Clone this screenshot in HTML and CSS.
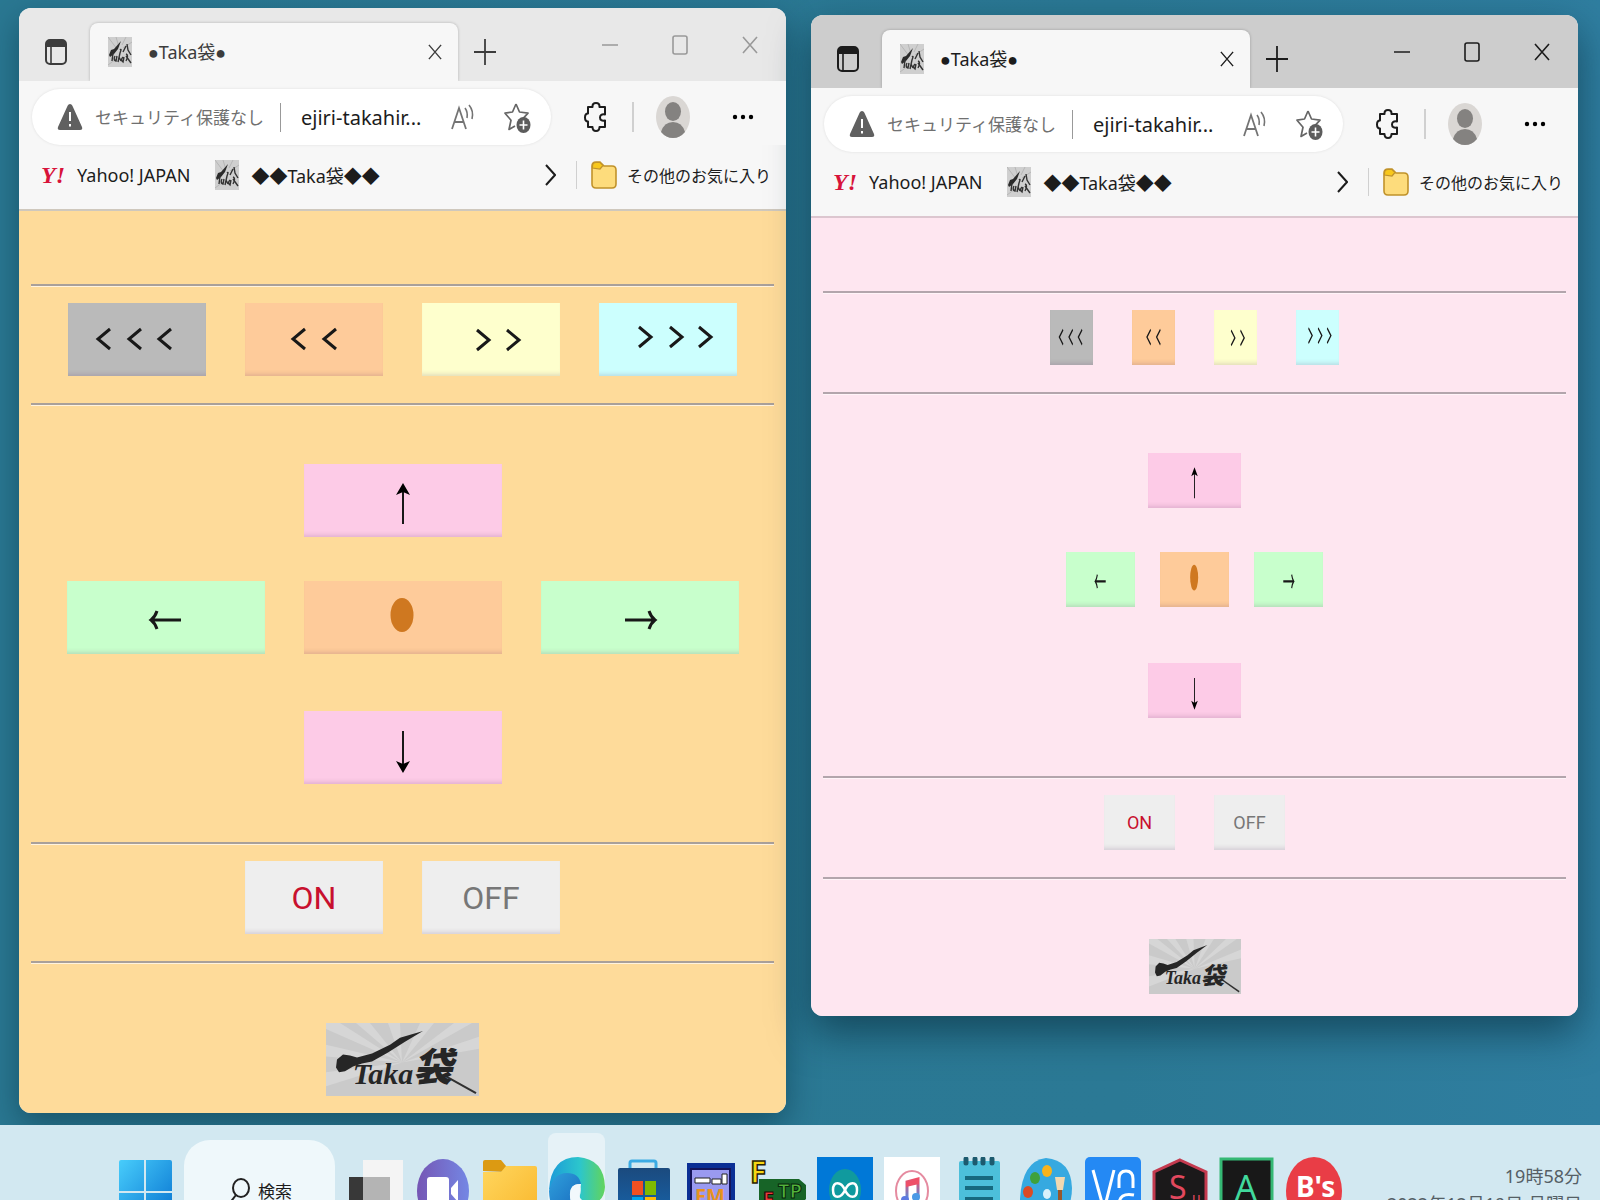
FILE: index.html
```html
<!doctype html>
<html lang="ja">
  <head>
    <title>●Taka袋●</title>
    <meta name="viewport" content="width=device-width, initial-scale=1.0" />
    <meta charset="utf-8" />
    <link rel="stylesheet" href="styles.css">
  </head>
  <body>
    <!-- shared drawings -->
    <svg class="defs" aria-hidden="true">
      <defs>
        <linearGradient id="edge-blue" x1="0" y1="0" x2="1" y2="1">
          <stop offset="0" stop-color="#2fa0dc" />
          <stop offset="1" stop-color="#1158b4" />
        </linearGradient>
        <linearGradient id="edge-green" x1="0" y1="0" x2="1" y2="0">
          <stop offset="0" stop-color="#1c9ad8" />
          <stop offset="0.55" stop-color="#2cc6cc" />
          <stop offset="1" stop-color="#62d45c" />
        </linearGradient>
        <linearGradient id="win-blue" x1="0" y1="0" x2="1" y2="1">
          <stop offset="0" stop-color="#48cdfb" />
          <stop offset="1" stop-color="#0570cf" />
        </linearGradient>
        <linearGradient id="chat" x1="0" y1="0" x2="1" y2="0">
          <stop offset="0" stop-color="#7556b4" />
          <stop offset="1" stop-color="#7487e4" />
        </linearGradient>
        <linearGradient id="folder" x1="0" y1="0" x2="1" y2="1">
          <stop offset="0" stop-color="#ffd65e" />
          <stop offset="1" stop-color="#f9b62a" />
        </linearGradient>
        <linearGradient id="store" x1="0" y1="0" x2="0" y2="1">
          <stop offset="0" stop-color="#1b4a7e" />
          <stop offset="1" stop-color="#1667b0" />
        </linearGradient>
        <linearGradient id="note" x1="0" y1="0" x2="0" y2="1">
          <stop offset="0" stop-color="#ee4f68" />
          <stop offset="1" stop-color="#4a8fe6" />
        </linearGradient>
      </defs>
      <symbol id="i-panel" viewBox="0 0 22 26">
        <rect x="1" y="1" width="20" height="24" rx="4" fill="none" stroke="currentColor" stroke-width="2" />
        <path d="M1 8V5q0-4 4-4h12q4 0 4 4v3z" fill="currentColor" />
        <path d="M6 8v17" stroke="currentColor" stroke-width="1.6" />
      </symbol>
      <symbol id="i-x" viewBox="0 0 16 18" preserveAspectRatio="none">
        <path d="M1 1l14 16M15 1L1 17" fill="none" stroke="currentColor" stroke-width="1.6" />
      </symbol>
      <symbol id="i-plus" viewBox="0 0 22 26">
        <path d="M11 0v26M0 13h22" stroke="currentColor" stroke-width="1.8" />
      </symbol>
      <symbol id="i-min" viewBox="0 0 16 18">
        <path d="M0 9h16" stroke="currentColor" stroke-width="1.6" />
      </symbol>
      <symbol id="i-max" viewBox="0 0 16 20">
        <rect x="1" y="1" width="14" height="18" rx="2" fill="none" stroke="currentColor" stroke-width="1.6" />
      </symbol>
      <symbol id="i-warn" viewBox="0 0 26 28">
        <path d="M13 1q1.600 0 2.400 1.800L25 24q1 3-2 3H3q-3 0-2-3L10.600 2.800Q11.400 1 13 1z" fill="#606060" />
        <path d="M13 9v9M13 21v2.500" stroke="#fff" stroke-width="2" />
      </symbol>
      <symbol id="i-read" viewBox="0 0 24 26">
        <path d="M1 25L8 4l7 21M3.500 18h9" fill="none" stroke="#747474" stroke-width="1.800" />
        <path d="M14 4q3 4 2 10M18 1q5 6 3 14" fill="none" stroke="#747474" stroke-width="1.600" />
      </symbol>
      <symbol id="i-star" viewBox="0 0 27 31">
        <path d="M12 2l3.500 8 8.500 1.200-6 6.500M12 2L8.500 10 1 11.200l6 7L5 27.500l6-3.500" fill="none" stroke="#666" stroke-width="1.700" stroke-linejoin="round" />
        <ellipse cx="19.500" cy="23" rx="7" ry="8" fill="#5c5c5c" />
        <path d="M19.500 18.500v9M15.500 23h8" stroke="#fff" stroke-width="1.600" />
      </symbol>
      <symbol id="i-puzzle" viewBox="0 0 23 30">
        <path d="M4 5h4.500q-.3-4 3.500-4t3.500 4H21v7.500q-5-.8-5 3t5 3V25h-5.500q0 4-3.500 4t-3.500-4H4v-5.500q-3 0-3-4t3-4z" fill="none" stroke="currentColor" stroke-width="2" stroke-linejoin="round" />
      </symbol>
      <symbol id="i-user" viewBox="0 0 34 42">
        <ellipse cx="17" cy="21" rx="17" ry="21" fill="#dad7d4" />
        <ellipse cx="17" cy="15.500" rx="8" ry="9.500" fill="#848280" />
        <path d="M5 36q3-10 12-10t12 10q-5 6-12 6T5 36z" fill="#848280" />
      </symbol>
      <symbol id="i-dots" viewBox="0 0 22 6">
        <circle cx="3" cy="3" r="2.200" /><circle cx="11" cy="3" r="2.200" /><circle cx="19" cy="3" r="2.200" />
      </symbol>
      <symbol id="i-chevron" viewBox="0 0 11 22">
        <path d="M1 1l9 10-9 10" fill="none" stroke="currentColor" stroke-width="2" />
      </symbol>
      <symbol id="i-folder" viewBox="0 0 26 28">
        <path d="M1 8V5q0-4 4-4h4l4 4h8q4 0 4 4v14q0 4-4 4H5q-4 0-4-4z" fill="#fddc7c" stroke="#c0922a" stroke-width="1.600" />
        <path d="M1.500 7V5q0-3.500 3.500-3.500h4l3 3-3 3.500z" fill="#f8c81c" stroke="#c0922a" stroke-width="1.200" />
      </symbol>
      <symbol id="i-taka" viewBox="0 0 24 30">
        <path d="M0 0h24v30H0z" fill="#cfcfcf" />
        <path d="M0 0l9 12M8 0l3 10M18 0l-4 8M24 5l-9 6M0 28l8-6" stroke="#b6b6b6" />
        <path d="M1 18l2-5 3-1 7-8-3 8-4 5-4 3z" fill="#2a2a2a" />
        <path d="M5 16l-1 8M7 19q-2 4 1 5l1-5M12 13q2-2 0 3l-2 9M11 20l2 4M15 20q-3 3 0 5l1-5M18 9l-3 6M19 7l1 6 3 5M18 17q3 1 0 7M18 19l5 7" fill="none" stroke="#333" stroke-width="1.400" />
      </symbol>
      <symbol id="i-brush" viewBox="0 0 153 74" preserveAspectRatio="none">
        <path d="M0 0h153v74H0z" fill="#cacaca" />
        <path d="M76 40L0 6V0h14zM76 40L30 0h14zM76 40L62 0h12zM76 40L94 0h14zM76 40L128 0h18zM76 40l77-26v12zM76 40L0 22v12zM76 40L0 50v14z" fill="#d6d6d6" />
        <path d="M10 45l1-8 6-5 7 1 7 2 15-4 18-9 10-7 23-7-18 11-17 11-16 9-10 2-9 3-8 5-6 1z" fill="#262626" />
        <path d="M120 54l30 17" stroke="#303030" stroke-width="2" fill="none" />
      </symbol>

      <!-- faces of the control keys, stretched with the key -->
      <symbol id="k-back3" viewBox="0 0 138 73" preserveAspectRatio="none">
        <path d="M42 26L30 36l12 10M73 26L61 36l12 10M103 26L91 36l12 10" />
      </symbol>
      <symbol id="k-back2" viewBox="0 0 138 73" preserveAspectRatio="none">
        <path d="M60 26L48 36l12 10M91 26L79 36l12 10" />
      </symbol>
      <symbol id="k-next2" viewBox="0 0 138 73" preserveAspectRatio="none">
        <path d="M55 27l12 10-12 10M85 27l12 10-12 10" />
      </symbol>
      <symbol id="k-next3" viewBox="0 0 138 73" preserveAspectRatio="none">
        <path d="M40 24l12 10-12 10M71 24l12 10-12 10M100 24l12 10-12 10" />
      </symbol>
      <symbol id="k-up" viewBox="0 0 198 73" preserveAspectRatio="none">
        <path d="M99 24v36" stroke-width="2" />
        <path d="M99 19l7 12-7-3-7 3z" fill="#000" stroke="none" />
      </symbol>
      <symbol id="k-down" viewBox="0 0 198 73" preserveAspectRatio="none">
        <path d="M99 20v37" stroke-width="2" />
        <path d="M99 62l7-12-7 3-7-3z" fill="#000" stroke="none" />
      </symbol>
      <symbol id="k-left" viewBox="0 0 198 73" preserveAspectRatio="none">
        <path d="M84 39h30M90 30q-2 6-6 9 4 3 6 9" />
      </symbol>
      <symbol id="k-right" viewBox="0 0 198 73" preserveAspectRatio="none">
        <path d="M84 39h30M108 30q2 6 6 9-4 3-6 9" />
      </symbol>
      <symbol id="k-stop" viewBox="0 0 198 73" preserveAspectRatio="none">
        <ellipse cx="98" cy="34" rx="11.500" ry="17" fill="#cf7820" stroke="none" />
      </symbol>
    </svg>

    <main class="desktop">
      <section class="window inactive">
        <header class="titlebar">
          <button class="tab-menu" aria-label="タブ操作メニュー"><svg width="22" height="26"><use href="#i-panel" /></svg></button>
          <div class="tab">
            <svg width="24" height="30"><use href="#i-taka" /></svg>
            <span class="tab-title">●Taka袋●</span>
            <button aria-label="タブを閉じる"><svg width="14" height="16"><use href="#i-x" /></svg></button>
          </div>
          <button class="new-tab" aria-label="新しいタブ"><svg width="22" height="26"><use href="#i-plus" /></svg></button>
          <div class="window-buttons">
            <button aria-label="最小化"><svg width="16" height="18"><use href="#i-min" /></svg></button>
            <button aria-label="最大化"><svg width="16" height="20"><use href="#i-max" /></svg></button>
            <button aria-label="閉じる"><svg width="16" height="18"><use href="#i-x" /></svg></button>
          </div>
        </header>
        <div class="toolbar">
          <div class="address">
            <svg width="26" height="28"><use href="#i-warn" /></svg>
            <label for="url-1">セキュリティ保護なし</label>
            <input id="url-1" type="text" value="ejiri-takahir..." />
            <button aria-label="音声で読み上げる"><svg width="24" height="26"><use href="#i-read" /></svg></button>
            <button aria-label="お気に入りに追加"><svg width="27" height="31"><use href="#i-star" /></svg></button>
          </div>
          <button class="extensions" aria-label="拡張機能"><svg width="23" height="30"><use href="#i-puzzle" /></svg></button>
          <button class="profile" aria-label="プロファイル"><svg width="34" height="42"><use href="#i-user" /></svg></button>
          <button class="more" aria-label="設定など"><svg width="22" height="6"><use href="#i-dots" /></svg></button>
        </div>
        <nav class="bookmarks">
          <a href="#"><span class="yahoo">Y!</span>Yahoo! JAPAN</a>
          <a href="#"><svg width="24" height="30"><use href="#i-taka" /></svg>◆◆Taka袋◆◆</a>
          <button class="next" aria-label="次へ"><svg width="11" height="22"><use href="#i-chevron" /></svg></button>
          <a class="others" href="#"><svg width="26" height="28"><use href="#i-folder" /></svg>その他のお気に入り</a>
        </nav>
        <div class="page page-wide">
          <hr>
          <div class="keys speed">
            <button class="key gray" aria-label="<<<"><svg><use href="#k-back3" /></svg></button>
            <button class="key orange" aria-label="<<"><svg><use href="#k-back2" /></svg></button>
            <button class="key yellow" aria-label=">>"><svg><use href="#k-next2" /></svg></button>
            <button class="key cyan" aria-label=">>>"><svg><use href="#k-next3" /></svg></button>
          </div>
          <hr>
          <div class="pad">
            <div class="keys"><button class="key vertical pink" aria-label="↑"><svg><use href="#k-up" /></svg></button></div>
            <div class="keys middle">
              <button class="key green" aria-label="←"><svg><use href="#k-left" /></svg></button>
              <button class="key orange" aria-label="●"><svg><use href="#k-stop" /></svg></button>
              <button class="key green" aria-label="→"><svg><use href="#k-right" /></svg></button>
            </div>
            <div class="keys"><button class="key vertical pink" aria-label="↓"><svg><use href="#k-down" /></svg></button></div>
          </div>
          <hr>
          <div class="keys power">
            <button class="key on">ON</button>
            <button class="key off">OFF</button>
          </div>
          <hr>
          <a class="logo" href="#"><svg><use href="#i-brush" /></svg><span>Taka<b>袋</b></span></a>
        </div>
      </section>

      <section class="window active">
        <header class="titlebar">
          <button class="tab-menu" aria-label="タブ操作メニュー"><svg width="22" height="26"><use href="#i-panel" /></svg></button>
          <div class="tab">
            <svg width="24" height="30"><use href="#i-taka" /></svg>
            <span class="tab-title">●Taka袋●</span>
            <button aria-label="タブを閉じる"><svg width="14" height="16"><use href="#i-x" /></svg></button>
          </div>
          <button class="new-tab" aria-label="新しいタブ"><svg width="22" height="26"><use href="#i-plus" /></svg></button>
          <div class="window-buttons">
            <button aria-label="最小化"><svg width="16" height="18"><use href="#i-min" /></svg></button>
            <button aria-label="最大化"><svg width="16" height="20"><use href="#i-max" /></svg></button>
            <button aria-label="閉じる"><svg width="16" height="18"><use href="#i-x" /></svg></button>
          </div>
        </header>
        <div class="toolbar">
          <div class="address">
            <svg width="26" height="28"><use href="#i-warn" /></svg>
            <label for="url-2">セキュリティ保護なし</label>
            <input id="url-2" type="text" value="ejiri-takahir..." />
            <button aria-label="音声で読み上げる"><svg width="24" height="26"><use href="#i-read" /></svg></button>
            <button aria-label="お気に入りに追加"><svg width="27" height="31"><use href="#i-star" /></svg></button>
          </div>
          <button class="extensions" aria-label="拡張機能"><svg width="23" height="30"><use href="#i-puzzle" /></svg></button>
          <button class="profile" aria-label="プロファイル"><svg width="34" height="42"><use href="#i-user" /></svg></button>
          <button class="more" aria-label="設定など"><svg width="22" height="6"><use href="#i-dots" /></svg></button>
        </div>
        <nav class="bookmarks">
          <a href="#"><span class="yahoo">Y!</span>Yahoo! JAPAN</a>
          <a href="#"><svg width="24" height="30"><use href="#i-taka" /></svg>◆◆Taka袋◆◆</a>
          <button class="next" aria-label="次へ"><svg width="11" height="22"><use href="#i-chevron" /></svg></button>
          <a class="others" href="#"><svg width="26" height="28"><use href="#i-folder" /></svg>その他のお気に入り</a>
        </nav>
        <div class="page page-small">
          <hr>
          <div class="keys speed">
            <button class="key gray" aria-label="<<<"><svg><use href="#k-back3" /></svg></button>
            <button class="key orange" aria-label="<<"><svg><use href="#k-back2" /></svg></button>
            <button class="key yellow" aria-label=">>"><svg><use href="#k-next2" /></svg></button>
            <button class="key cyan" aria-label=">>>"><svg><use href="#k-next3" /></svg></button>
          </div>
          <hr>
          <div class="pad">
            <div class="keys"><button class="key vertical pink" aria-label="↑"><svg><use href="#k-up" /></svg></button></div>
            <div class="keys middle">
              <button class="key green" aria-label="←"><svg><use href="#k-left" /></svg></button>
              <button class="key orange" aria-label="●"><svg><use href="#k-stop" /></svg></button>
              <button class="key green" aria-label="→"><svg><use href="#k-right" /></svg></button>
            </div>
            <div class="keys"><button class="key vertical pink" aria-label="↓"><svg><use href="#k-down" /></svg></button></div>
          </div>
          <hr>
          <div class="keys power">
            <button class="key on">ON</button>
            <button class="key off">OFF</button>
          </div>
          <hr>
          <a class="logo" href="#"><svg><use href="#i-brush" /></svg><span>Taka<b>袋</b></span></a>
        </div>
      </section>
    </main>

    <footer class="taskbar">
      <button class="app" aria-label="スタート">
        <svg viewBox="0 0 56 66"><path d="M1 5q0-2 2-2h23v31H1zM28 3h24q2 0 2 2v29H28zM1 36h25v30H1zM28 36h26v30H28z" fill="url(#win-blue)" /></svg>
      </button>
      <button class="search">
        <svg width="22" height="28" viewBox="0 0 22 28"><ellipse cx="13" cy="10" rx="8" ry="9" /><path d="M8 17L1 26" /></svg>
        検索
      </button>
      <button class="app" aria-label="タスク ビュー">
        <svg viewBox="0 0 56 66"><path d="M15 3h40v60H15z" fill="#f4f4f4" /><path d="M1 20h41v46H1z" fill="#383838" /><path d="M15 20h27v46H15z" fill="#b4b4b4" /></svg>
      </button>
      <button class="app" aria-label="チャット">
        <svg viewBox="0 0 56 66"><ellipse cx="28" cy="34" rx="26" ry="32" fill="url(#chat)" /><rect x="12" y="20" width="22" height="28" rx="3" fill="#fff" /><path d="M36 31l7-8v22l-7-8z" fill="#fff" /></svg>
      </button>
      <button class="app" aria-label="エクスプローラー">
        <svg viewBox="0 0 56 66"><path d="M1 14V5q0-2 2-2h16l5 6v6z" fill="#dc9a12" /><path d="M1 15h18l5-6h29q2 0 2 2v55H1z" fill="url(#folder)" /></svg>
      </button>
      <button class="app current" aria-label="Microsoft Edge">
        <svg viewBox="0 0 56 66">
          <path d="M0 33Q2 0 29 0q26 2 27 30-1 16-16 17-12-1-9-9 2-6-1-10Q18 10 0 33z" fill="url(#edge-green)" />
          <path d="M0 34q4-18 18-18 12 0 14 11-12-1-11 12 2 19 22 20-9 7-18 7Q1 62 0 34z" fill="url(#edge-blue)" />
          <path d="M32 27q-11-1-11 12 0 6 4 10l8-6q-4-3-2-8z" fill="#f2f8fc" />
        </svg>
      </button>
      <button class="app" aria-label="Microsoft Store">
        <svg viewBox="0 0 56 66"><path d="M14 13V6q0-2 2-2h22q2 0 2 2v7" fill="none" stroke="#3cabe4" stroke-width="3" /><path d="M2 13q0-2 2-2h48q2 0 2 2v53H2z" fill="url(#store)" /><path d="M16 24h11v14H16z" fill="#f25022" /><path d="M29 24h11v14H29z" fill="#7fba00" /><path d="M16 40h11v14H16z" fill="#00a4ef" /><path d="M29 40h11v14H29z" fill="#ffb900" /></svg>
      </button>
      <button class="app" aria-label="FM">
        <svg viewBox="0 0 56 66"><path d="M4 6h48v60H4z" fill="#0b2f95" /><path d="M8 12h39v54H8z" fill="#9a9af0" stroke="#15155a" stroke-width="2" /><path d="M12 21h15v5H12zM29 22h9v5h-9zM39 17h5v10h-5z" fill="#fff" stroke="#222" /><text x="12" y="46" font-size="20" font-weight="bold" fill="#e8921c">FM</text></svg>
      </button>
      <button class="app" aria-label="FFFTP">
        <svg viewBox="0 0 56 66"><path d="M9 22h40l7 6v14l-9 8v16H9z" fill="#176427" /><text x="0" y="26" font-size="30" font-weight="bold" fill="#f6d613" stroke="#2a2400" stroke-width="1.500">F</text><text x="28" y="41" font-size="20" font-weight="bold" fill="#52b43b" stroke="#07240c">TP</text><text x="13" y="49" font-size="20" font-weight="bold" fill="#ec3b3b" stroke="#240404">F</text></svg>
      </button>
      <button class="app" aria-label="Arduino">
        <svg viewBox="0 0 56 66"><path d="M0 0h56v66H0z" fill="#0078d7" /><ellipse cx="28" cy="33" rx="16" ry="21" fill="#109a9e" /><path d="M28 33c-4-9-12-9-12 0s8 9 12 0 12-9 12 0-8 9-12 0z" fill="none" stroke="#fff" stroke-width="2.500" /></svg>
      </button>
      <button class="app" aria-label="iTunes">
        <svg viewBox="0 0 56 66"><path d="M0 0h56v66H0z" fill="#fff" /><ellipse cx="28" cy="34" rx="16" ry="20" fill="none" stroke="#e58ba0" stroke-width="2" /><path d="M23 43V25l11-3v18" fill="none" stroke="url(#note)" stroke-width="3" /><path d="M22 25l13-3v5l-13 3z" fill="#ee4f68" /><ellipse cx="21" cy="43" rx="4" ry="4" fill="#5c7ae2" /><ellipse cx="32" cy="40" rx="4" ry="4" fill="#4a9ae6" /></svg>
      </button>
      <button class="app" aria-label="メモ帳">
        <svg viewBox="0 0 56 66"><path d="M8 6q0-2 2-2h37q2 0 2 2v60H8z" fill="#4cbfda" /><path d="M14 21h28M14 31h28M14 42h28M14 53h28" stroke="#16697f" stroke-width="4" /><path d="M15 2v4M24 2v4M32 2v4M41 2v4" stroke="#1c5a6e" stroke-width="5" stroke-linecap="round" /></svg>
      </button>
      <button class="app" aria-label="ペイント">
        <svg viewBox="0 0 56 66"><path d="M28 1q25 2 26 30 0 22-16 35H6q-4-10-4-24Q4 4 28 1z" fill="#36a9e0" /><ellipse cx="17" cy="21" rx="5" ry="6" fill="#3fa13b" /><ellipse cx="29" cy="14" rx="5" ry="6" fill="#f9b31c" /><ellipse cx="10" cy="35" rx="5" ry="6" fill="#dc4a24" /><ellipse cx="29" cy="37" rx="4" ry="5" fill="#d8f1fb" /><path d="M37 20h10l-2 13h-6z" fill="#f2d9b0" /><path d="M40 33h4v33h-4z" fill="#97572b" /></svg>
      </button>
      <button class="app" aria-label="VNC Viewer">
        <svg viewBox="0 0 56 66"><rect width="56" height="80" rx="5" fill="#2489f4" /><path d="M8 13l11 40 10-40" fill="none" stroke="#fff" stroke-width="3" /><path d="M34 31V22q0-8 7-8t7 8v9M49 38q-15-3-15 10 0 12 15 8" fill="none" stroke="#fff" stroke-width="3" /></svg>
      </button>
      <button class="app" aria-label="S">
        <svg viewBox="0 0 56 66"><path d="M28 3l26 12v60H2V15z" fill="#1b191a" stroke="#c43a4f" stroke-width="3" /><text x="17" y="42" font-size="32" fill="#e2485e">S</text><text x="40" y="46" font-size="14" fill="#e2485e">u</text></svg>
      </button>
      <button class="app" aria-label="A">
        <svg viewBox="0 0 56 66"><path d="M2 2h51v70H2z" fill="#181818" stroke="#35b874" stroke-width="3" /><text x="16" y="43" font-size="34" fill="#41d99c">A</text></svg>
      </button>
      <button class="app" aria-label="B's">
        <svg viewBox="0 0 56 66"><ellipse cx="28" cy="34" rx="28" ry="34" fill="#e93d46" /><text x="10" y="40" font-size="28" font-weight="bold" fill="#fff">B's</text></svg>
      </button>
      <div class="clock">
        <time>19時58分</time>
        <time>2022年12月19日 月曜日</time>
      </div>
    </footer>
  </body>
</html>
```

FILE: styles.css
```css
* {
  box-sizing: border-box;
}

body {
  margin: 0;
  height: 100vh;
  overflow: hidden;
  display: flex;
  flex-direction: column;
  background: linear-gradient(90deg, #2a7892, #2b7995 70%, #2f7ea0);
  color: #1c1c1c;
  font-family: "Noto Sans", "Liberation Sans", "Noto Sans CJK JP", sans-serif;
  font-size: 18px;
}

button {
  display: block;
  padding: 0;
  border: none;
  background: none;
  color: inherit;
  font: inherit;
}

a {
  color: inherit;
  text-decoration: none;
}

svg {
  display: block;
  flex: none;
}

.defs {
  position: absolute;
  width: 0;
  height: 0;
}

/* windows */

.desktop {
  flex: 1;
  min-height: 0;
  display: flex;
  align-items: flex-start;
  gap: 25px;
  padding: 8px 22px 0 19px;
}

.window {
  flex: 1;
  min-width: 0;
  border-radius: 12px;
  overflow: hidden;
  background: #f7f7f7;
  box-shadow: 0 12px 32px rgba(5, 40, 55, 0.45);
}

.window.active {
  margin-top: 7px;
  box-shadow: 0 16px 40px rgba(5, 40, 55, 0.6);
}

.titlebar {
  display: flex;
  height: 73px;
  padding: 0 28px 0 26px;
  background: #e8e8e8;
  color: #3c3c3c;
}

.active .titlebar {
  background: #cdcdcd;
  color: #1c1c1c;
}

.tab-menu,
.new-tab {
  margin-top: 15px;
}

.tab {
  flex: 0 1 368px;
  display: flex;
  align-items: center;
  margin: 15px 16px 0 23px;
  padding: 0 16px 0 18px;
  border-radius: 8px 8px 0 0;
  background: #f7f7f7;
  box-shadow: 0 0 3px rgba(0, 0, 0, 0.25);
}

.tab-title {
  flex: 1;
  margin-left: 16px;
  line-height: 24px;
}

.window-buttons {
  display: flex;
  align-items: center;
  gap: 54px;
  margin-left: auto;
}

.inactive .window-buttons {
  color: #999;
}

.toolbar {
  position: relative;
  display: flex;
  align-items: center;
  padding: 8px 32px 0 13px;
  background: #f7f7f7;
}

.address {
  flex: 1;
  min-width: 0;
  display: flex;
  align-items: center;
  height: 56px;
  padding: 0 20px 0 25px;
  border-radius: 28px;
  background: #fff;
  box-shadow: 0 0 3px rgba(0, 0, 0, 0.1);
}

.address label {
  margin-left: 12px;
  padding-right: 16px;
  border-right: 1px solid #999;
  color: #707070;
  font-size: 17px;
  line-height: 29px;
  white-space: nowrap;
}

.address input {
  flex: 1;
  min-width: 0;
  padding: 0 0 0 20px;
  border: none;
  outline: none;
  background: none;
  color: #1c1c1c;
  font: inherit;
  font-size: 20px;
}

.address button + button {
  margin-left: 29px;
}

.extensions {
  margin-left: 33px;
  padding-right: 25px;
  border-right: 2px solid #d0d0d0;
}

.profile {
  margin: 0 42px 0 22px;
}

.bookmarks {
  display: flex;
  align-items: center;
  height: 66px;
  padding: 0 15px 4px 22px;
  border-bottom: 2px solid #cfc8bd;
  white-space: nowrap;
}

.active .bookmarks {
  border-bottom-color: #dcc6cf;
}

.bookmarks a {
  display: flex;
  align-items: center;
  gap: 12px;
  margin-right: 25px;
}

.yahoo {
  width: 24px;
  color: #d8133a;
  font: italic bold 24px "Liberation Serif", serif;
}

.next {
  margin: 0 20px 0 auto;
}

.bookmarks .others {
  gap: 10px;
  margin: 0;
  padding-left: 14px;
  border-left: 1px solid #d0d0d0;
  font-size: 16px;
}

/* controller page */

.page {
  padding: 73px 12px 17px;
  background: #fedb9a;
}

.page-wide {
  --key-height: 73px;
  --speed-width: 138px;
  --power-width: 138px;
  --arrow-width: 198px;
  --middle-width: 198px;
  --middle-gap: 39px;
  --logo-width: 153px;
  --label-size: 32px;
  --logo-size: 30px;
}

.page-small {
  --key-height: 55px;
  --speed-width: 43px;
  --power-width: 71px;
  --arrow-width: 93px;
  --middle-width: 69px;
  --middle-gap: 25px;
  --logo-width: 92px;
  --label-size: 18px;
  --logo-size: 18px;
  padding-bottom: 22px;
  background: #fee6f0;
}

.page hr {
  height: 3px;
  margin: 0;
  border: solid;
  border-width: 2px 0 1px;
  border-color: #a9a09a #fff0d8 #fff3df;
}

.page-small hr {
  border-color: #b3a5ac #fff #fff4f8;
}

.keys {
  display: flex;
  justify-content: center;
  gap: 39px;
}

.speed,
.power {
  padding: 16px 0 27px;
}

.pad {
  padding: 58px 0;
}

.middle {
  gap: var(--middle-gap);
  margin: 44px 0 57px;
}

.page-small .middle {
  margin-bottom: 56px;
}

.key {
  width: var(--speed-width);
  height: var(--key-height);
  box-shadow: inset 0 -5px 4px -3px rgba(80, 40, 90, 0.16);
}

.key svg {
  width: 100%;
  height: 100%;
  fill: none;
  stroke: #181818;
  stroke-width: 3;
}

.middle .key {
  width: var(--middle-width);
}

.vertical {
  width: var(--arrow-width);
}

.power .key {
  width: var(--power-width);
  background: #eee;
  font-family: Roboto, sans-serif;
  font-size: var(--label-size);
}

.power .on {
  color: #c8102e;
}

.power .off {
  color: #777;
}

.gray {
  background: #bababa;
}

.orange {
  background: #fecb9a;
}

.yellow {
  background: #feffcd;
}

.cyan {
  background: #ccfffe;
}

.pink {
  background: #fdcbe7;
}

.green {
  background: #c8ffcc;
}

.logo {
  display: grid;
  width: var(--logo-width);
  height: var(--key-height);
  margin: 59px auto 0;
}

.logo svg,
.logo span {
  grid-area: 1 / 1;
  width: 100%;
  height: 100%;
}

.logo span {
  display: flex;
  align-items: flex-end;
  justify-content: center;
  padding-bottom: 4px;
  color: #262626;
  font: italic bold var(--logo-size) / 1.2 "Liberation Serif", "Noto Sans CJK JP", serif;
}

.logo b {
  font-size: 1.3em;
}

/* taskbar */

.taskbar {
  flex: 0 0 75px;
  display: flex;
  align-items: flex-start;
  overflow: hidden;
  position: relative;
  padding: 8px 18px 0 112px;
  background: #d2e8f1;
}

.app {
  display: flex;
  align-items: flex-start;
  justify-content: center;
  flex: 0 0 67px;
  height: 100px;
  padding-top: 24px;
}

.app svg {
  width: 56px;
  height: 66px;
  font-family: "Noto Sans", sans-serif;
}

.current {
  flex-basis: 57px;
  margin: 0 5px;
  border-radius: 8px;
  background: #e6f2f7;
}

.search {
  display: flex;
  gap: 8px;
  flex: 0 0 151px;
  height: 100px;
  margin: 7px 7px 0 5px;
  padding: 38px 0 0 44px;
  border-radius: 26px;
  background: #eff8fb;
  font-size: 17px;
}

.search svg {
  fill: none;
  stroke: #222;
  stroke-width: 2;
}

.clock {
  display: flex;
  flex-direction: column;
  align-items: flex-end;
  margin: 29px 0 0 auto;
  color: #555f66;
  line-height: 28px;
  white-space: nowrap;
}
```
